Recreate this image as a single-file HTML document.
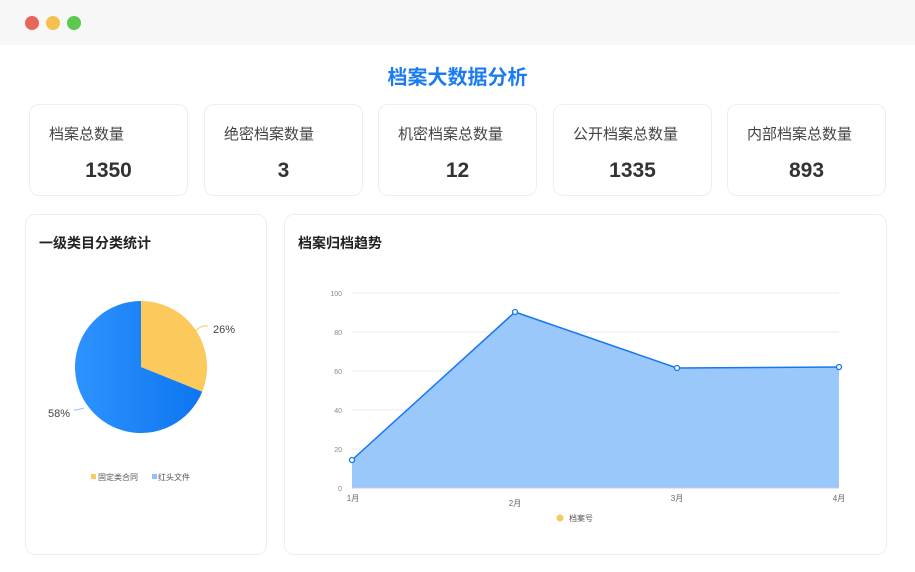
<!DOCTYPE html>
<html><head><meta charset="utf-8"><style>
*{margin:0;padding:0;box-sizing:border-box}
body{width:915px;height:572px;background:#fff;font-family:"Liberation Sans","Noto Sans CJK SC",sans-serif;position:relative;overflow:hidden;color:#333}
.top{position:absolute;left:0;top:0;width:915px;height:45px;background:#f7f7f7}
.dot{position:absolute;top:16px;width:14px;height:14px;border-radius:50%}
.title{position:absolute;top:61px;left:0;width:915px;text-align:center;color:#1a7cf0;font-size:20px;font-weight:bold}
.card{position:absolute;top:104px;height:92px;border:1px solid #eceef2;border-radius:10px;width:159px}
.card .l{position:absolute;left:19px;top:18px;font-size:15px;color:#444}
.card .n{position:absolute;left:0;width:100%;top:54px;text-align:center;font-size:21px;font-weight:bold;color:#333}
.panel{position:absolute;top:214px;border:1px solid #eceef2;border-radius:10px;height:341px}
.ph{position:absolute;left:13px;top:18px;font-size:14px;font-weight:bold;color:#222}
</style></head><body>
<div class="top"></div>
<div class="dot" style="left:25px;background:#e8675b"></div>
<div class="dot" style="left:46px;background:#f5c04d"></div>
<div class="dot" style="left:67px;background:#5cc84f"></div>
<div class="title">档案大数据分析</div>
<div class="card" style="left:29px"><div class="l">档案总数量</div><div class="n">1350</div></div>
<div class="card" style="left:204px"><div class="l">绝密档案数量</div><div class="n">3</div></div>
<div class="card" style="left:378px"><div class="l">机密档案总数量</div><div class="n">12</div></div>
<div class="card" style="left:553px"><div class="l">公开档案总数量</div><div class="n">1335</div></div>
<div class="card" style="left:727px"><div class="l">内部档案总数量</div><div class="n">893</div></div>
<div class="panel" style="left:25px;width:242px"><div class="ph">一级类目分类统计</div></div>
<div class="panel" style="left:284px;width:603px"><div class="ph">档案归档趋势</div></div>
<svg width="915" height="572" style="position:absolute;left:0;top:0" font-family="Liberation Sans,Noto Sans CJK SC,sans-serif">
<defs><linearGradient id="g" x1="0" x2="1"><stop offset="0" stop-color="#2d93ff"/><stop offset="1" stop-color="#0d75f0"/></linearGradient></defs>
<path d="M141,367 L141,301 A66,66 0 0 1 202.2,391.7 Z" fill="#fbc95c"/>
<path d="M141,367 L202.2,391.7 A66,66 0 1 1 141,301 Z" fill="url(#g)"/>
<path d="M195,332 Q200,325 208,326" stroke="#fbc95c" fill="none"/>
<text x="213" y="333" font-size="11" fill="#444">26%</text>
<path d="M84,408 Q78,410 74,410" stroke="#8fc0ff" fill="none"/>
<text x="48" y="417" font-size="11" fill="#444">58%</text>
<rect x="91" y="474" width="5" height="5" fill="#fbc95c"/><text x="98" y="480" font-size="8" fill="#555">固定类合同</text>
<rect x="152" y="474" width="5" height="5" fill="#8fc0ff"/><text x="158" y="480" font-size="8" fill="#555">红头文件</text>
<g stroke="#e8ebf2" stroke-width="1">
<line x1="352" y1="293" x2="839" y2="293"/><line x1="352" y1="332" x2="839" y2="332"/><line x1="352" y1="371" x2="839" y2="371"/><line x1="352" y1="410" x2="839" y2="410"/><line x1="352" y1="449" x2="839" y2="449"/>
</g>
<g font-size="7" fill="#888" text-anchor="end">
<text x="342" y="296">100</text><text x="342" y="335">80</text><text x="342" y="374">60</text><text x="342" y="413">40</text><text x="342" y="452">20</text><text x="342" y="491">0</text>
</g>
<path d="M352,460 L515,312 L677,368 L839,367 L839,488 L352,488 Z" fill="#9ac8fb"/>
<polyline points="352,460 515,312 677,368 839,367" fill="none" stroke="#1677f0" stroke-width="1.5"/>
<line x1="352" y1="488" x2="839" y2="488" stroke="#ccd" />
<g fill="#fff" stroke="#1677f0" stroke-width="1.3"><circle cx="352" cy="460" r="2.5"/><circle cx="515" cy="312" r="2.5"/><circle cx="677" cy="368" r="2.5"/><circle cx="839" cy="367" r="2.5"/></g>
<g font-size="8" fill="#666" text-anchor="middle"><text x="353" y="501">1月</text><text x="515" y="506">2月</text><text x="677" y="501">3月</text><text x="839" y="501">4月</text></g>
<circle cx="560" cy="518" r="3.5" fill="#fbc95c"/>
<text x="569" y="521" font-size="8" fill="#555">档案号</text>
</svg>
</body></html>
